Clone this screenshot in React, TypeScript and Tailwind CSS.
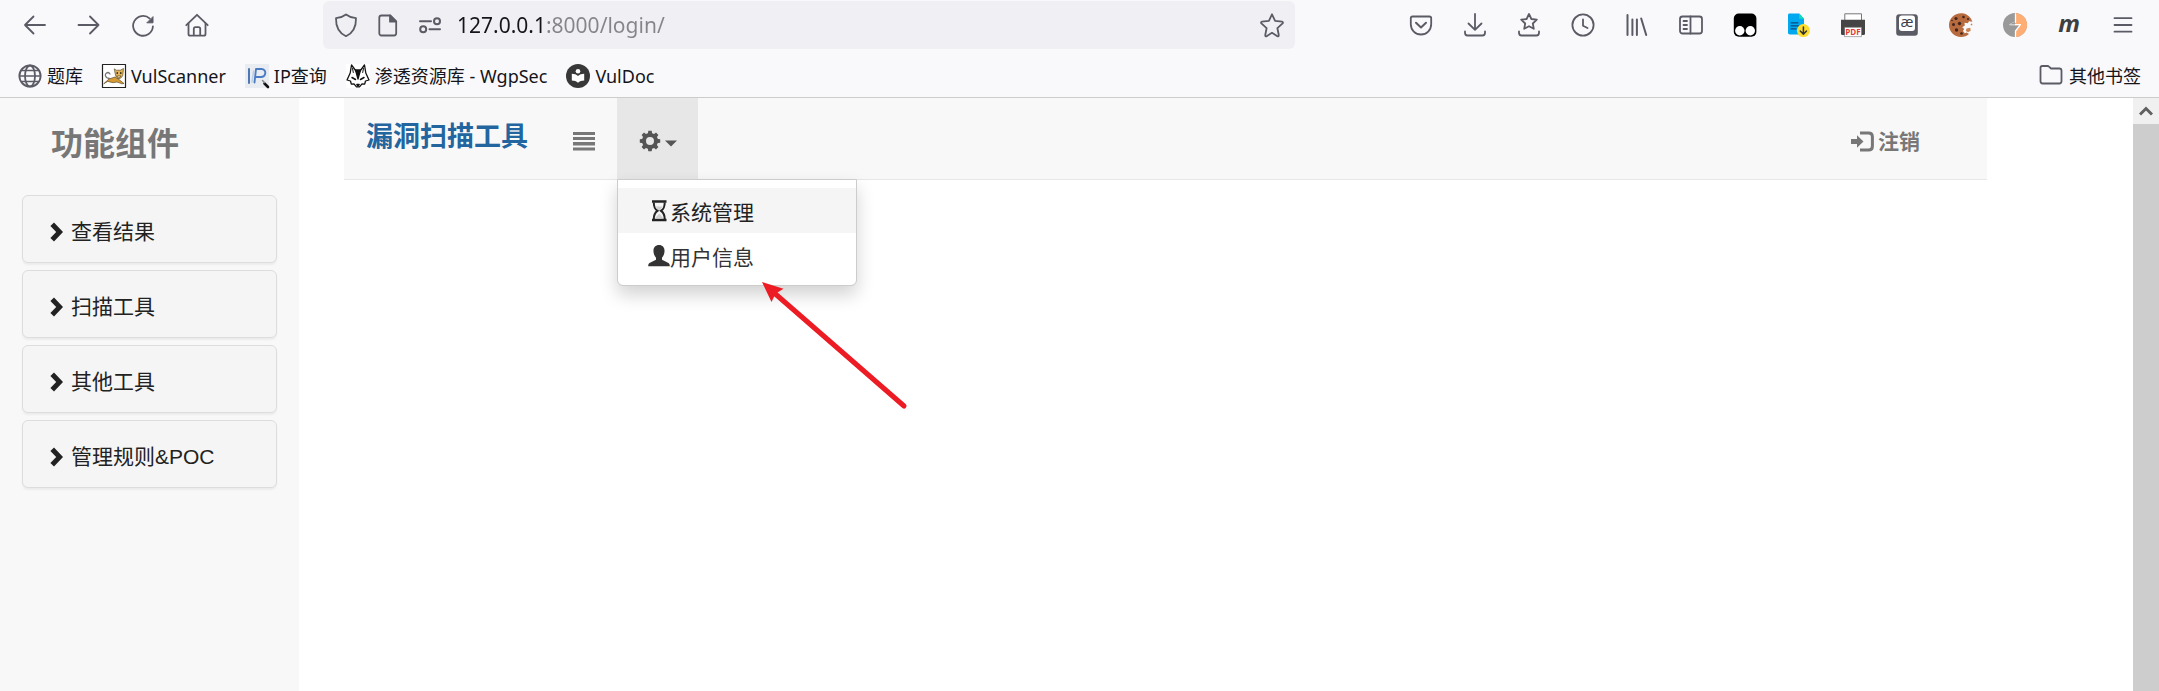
import type { ReactNode } from "react";

/* ---------- shared icon wrapper ---------- */

function Glyph({ children }: { children: ReactNode }) {
  return (
    <svg
      viewBox="0 0 24 24"
      className="size-6 shrink-0 overflow-visible"
      fill="none"
      stroke="#5b5b66"
      strokeWidth="1.8"
      strokeLinecap="round"
      strokeLinejoin="round"
      aria-hidden="true"
    >
      {children}
    </svg>
  );
}

const starPath =
  "M12 1.300l3.100 6.500 7 .9c.8.1 1.100 1 .5 1.600l-5.200 4.900 1.400 7c.2.8-.7 1.400-1.400 1L12 19.800l-5.400 3.400c-.7.4-1.600-.2-1.400-1l1.400-7-5.200-4.900c-.6-.6-.3-1.500.5-1.600l7-.9z";

/* ---------- browser toolbar ---------- */

const navButtons: { name: string; icon: ReactNode }[] = [
  { name: "Back", icon: <path d="M22 12H2M10.500 3.500L2 12l8.500 8.500" /> },
  { name: "Forward", icon: <path d="M1.500 12h20M13 3.500L21.500 12 13 20.500" /> },
  {
    name: "Reload",
    icon: (
      <>
        <path d="M18.800 5.600A9.900 9.900 0 1 0 21.900 13.500" />
        <path d="M22 4v5.800h-5.800z" fill="#5b5b66" strokeWidth="1" />
      </>
    ),
  },
  {
    name: "Home",
    icon: (
      <>
        <path d="M1.300 12.200L12 1.800l10.700 10.400" />
        <path d="M3.500 10.500v10.500c0 1 .7 1.700 1.700 1.700h13.600c1 0 1.700-.7 1.700-1.700V10.500" />
        <path d="M8.800 22.200v-6.400c0-1 .6-1.600 1.600-1.600h3.200c1 0 1.600.6 1.600 1.600v6.400" />
      </>
    ),
  },
];

const toolButtons: { name: string; icon: ReactNode }[] = [
  {
    name: "Pocket",
    icon: (
      <>
        <path d="M3.600 3.500h16.800c1 0 1.800.8 1.800 1.800v6a10.200 10.200 0 0 1-20.400 0v-6c0-1 .8-1.800 1.800-1.800z" />
        <path d="M7 9.700l5 4.700 5-4.700" strokeWidth="2" />
      </>
    ),
  },
  {
    name: "Downloads",
    icon: (
      <>
        <path d="M12 1v15.500M5.500 10.500L12 16.800l6.500-6.300" />
        <path d="M2 18.500v1.300c0 1.500 1 2.700 2.500 2.700h15c1.500 0 2.500-1.200 2.500-2.700v-1.300" />
      </>
    ),
  },
  {
    name: "Bookmarks menu",
    icon: (
      <>
        <path d="M12 1l2.400 5 5.400.7-4 3.800 1 5.300L12 13.200l-4.800 2.600 1-5.300-4-3.800 5.400-.7z" />
        <path d="M2 18.500v1.300c0 1.500 1 2.700 2.500 2.700h15c1.500 0 2.500-1.200 2.500-2.700v-1.300" />
      </>
    ),
  },
  {
    name: "History",
    icon: (
      <>
        <circle cx="12" cy="12" r="10.600" />
        <path d="M12 6.500v6.200l4.500 2.300" />
      </>
    ),
  },
  {
    name: "Library",
    icon: <path d="M2.500 2v20M7.400 6.500V22M11.900 6.500V22M16.200 5.500L21.200 22" strokeWidth="2" />,
  },
  {
    name: "Sidebars",
    icon: (
      <>
        <rect x="1" y="3.500" width="22" height="17" rx="2.500" />
        <path d="M11.500 3.500v17M4.500 8h3.500M4.500 12h3.500M4.500 16h3.500" />
      </>
    ),
  },
  {
    name: "Script manager",
    icon: (
      <g stroke="none">
        <rect x="0.800" y="0.500" width="22.600" height="23.300" rx="5" fill="#000" />
        <circle cx="6.800" cy="17.800" r="4.700" fill="#fff" />
        <circle cx="17.300" cy="17.800" r="4.700" fill="#fff" />
      </g>
    ),
  },
  {
    name: "Document download",
    icon: (
      <g stroke="none">
        <path d="M2.500.5h9.700l4.800 5.200v15.800H3C1.700 21.500 1 20.800 1 19.500V2C1 1.100 1.600.5 2.500.5z" fill="#00a8f0" />
        <path d="M12.200.500l4.800 5.200h-4.800z" fill="#10dcb4" />
        <path d="M4 9.800h7M4 12.800h7.500M4 15.800h5" stroke="#0b4a80" strokeWidth="1.300" />
        <circle cx="16.400" cy="17.600" r="6.500" fill="#fddc2e" />
        <path d="M16.400 14v7M13.300 18l3.100 3.100 3.100-3.100" stroke="#333" strokeWidth="1.500" fill="none" />
      </g>
    ),
  },
  {
    name: "Print to PDF",
    icon: (
      <g stroke="none">
        <path d="M3.800 7V.8h16.700V7" fill="#fff" stroke="#777" strokeWidth="1" />
        <path d="M0 6.700h24v13.800c0 .9-.5 1.500-1.300 1.500H1.300C.5 22 0 21.400 0 20.500z" fill="#454545" />
        <rect x="3.800" y="14.300" width="16.700" height="9.300" fill="#fff" stroke="#777" strokeWidth="0.600" />
        <text x="12" y="22" textAnchor="middle" fontSize="8" fontWeight="700" fontFamily="Open Sans, sans-serif" fill="#e53935">
          PDF
        </text>
      </g>
    ),
  },
  {
    name: "Phonetics",
    icon: (
      <g stroke="none">
        <rect x="1.200" y="1.200" width="21.600" height="21.600" rx="3" fill="#5b5b66" />
        <rect x="4" y="2.500" width="16" height="15.500" rx="3" fill="#fff" />
        <text x="12" y="14" textAnchor="middle" fontSize="15" fontFamily="Open Sans, sans-serif" fill="#3f3f4a">
          æ
        </text>
      </g>
    ),
  },
  {
    name: "Cookie editor",
    icon: (
      <g stroke="none">
        <path
          d="M13 .200C5.600-.2 0 5.200 0 12s5.300 12 12 12c3.300 0 6-1.200 8-3l-2.500-1.500-1.700.8-1.800-2.300 1.200-2-2-1.800 2.600-1.600-.3-2.800 3.300.4 1.200-2 3.400.6C22 4.200 18.200.500 13 .200z"
          fill="#b86b3e"
        />
        <path d="M17.500 15.500l3.800-.8.400 3-2.700 1.500-2.200-1.200z" fill="#c98352" />
        <path d="M22 10.500l1.500.6-.6 1.400-1.300-.4z" fill="#c98352" />
        <g fill="#43241c">
          <circle cx="7" cy="5.500" r="1.600" />
          <circle cx="14.500" cy="4" r="1.300" />
          <circle cx="4.500" cy="11.500" r="1.500" />
          <circle cx="10.500" cy="10.500" r="1.700" />
          <circle cx="7.500" cy="17" r="1.700" />
          <circle cx="19" cy="6" r="1" />
          <circle cx="12.500" cy="20.500" r="1.300" />
          <circle cx="3" cy="7.500" r=".8" />
        </g>
      </g>
    ),
  },
  {
    name: "Proxy switch",
    icon: (
      <g stroke="none">
        <circle cx="12" cy="12" r="12" fill="#999" />
        <path d="M12 0a12 12 0 0 1 0 24v-6l5.500-5.500H12V8.500z" fill="#ffad73" />
        <path d="M12.500 1v8.200L7 11.600h10.500L12.500 18v5.500" stroke="#fff" strokeWidth="1.300" fill="none" />
        <path d="M12 1v7.800L6 11.500h6z" fill="#999" />
      </g>
    ),
  },
  {
    name: "M extension",
    icon: (
      <text
        x="12"
        y="19"
        textAnchor="middle"
        fontSize="24"
        fontWeight="700"
        fontStyle="italic"
        fontFamily="Open Sans, sans-serif"
        fill="#3f3f3f"
        stroke="none"
      >
        m
      </text>
    ),
  },
  { name: "Menu", icon: <path d="M3.500 5.200h17M3.500 12h17M3.500 18.700h17" /> },
];

function ToolButton({ name, icon }: { name: string; icon: ReactNode }) {
  return (
    <button type="button" aria-label={name} className="flex h-12 w-[54px] items-center justify-center">
      <Glyph>{icon}</Glyph>
    </button>
  );
}

function AddressBar() {
  return (
    <form
      className="mx-[99px] flex h-12 min-w-0 flex-1 items-center rounded-md bg-[#f0f0f4] pr-[11px] pl-[11px]"
      onSubmit={(e) => e.preventDefault()}
    >
      <div className="flex gap-[18px]">
        <Glyph>
          <path d="M12 1.500c2.800 2.200 6 3.300 10 3.700.2 8.400-2.700 14.600-10 18-7.300-3.400-10.200-9.600-10-18 4-.4 7.200-1.500 10-3.700z" />
        </Glyph>
        <Glyph>
          <path d="M5.500 2.500h8.700l6 6v11.800c0 1.300-.9 2.200-2.200 2.200H5.500c-1.300 0-2.200-.9-2.200-2.200V4.700c0-1.300.9-2.200 2.200-2.200z" />
          <path d="M14 2.500v6.200h6.200z" fill="#5b5b66" />
        </Glyph>
        <Glyph>
          <path d="M2 8.300h11M11.500 16.300h10.500" strokeWidth="2" />
          <circle cx="19" cy="8.300" r="3" strokeWidth="2" />
          <circle cx="5.200" cy="16.300" r="3" strokeWidth="2" />
        </Glyph>
      </div>
      <input
        type="text"
        aria-label="Address"
        defaultValue="127.0.0.1:8000/login/"
        className="ml-[15px] min-w-0 flex-1 bg-[linear-gradient(to_right,#15141a_88px,#85848b_88px)] bg-clip-text font-['Noto_Sans',sans-serif] text-[21px] leading-8 text-transparent caret-black outline-none"
      />
      <button type="button" aria-label="Bookmark this page">
        <Glyph>
          <path d={starPath} />
        </Glyph>
      </button>
    </form>
  );
}

/* ---------- bookmarks ---------- */

const bookmarks: { title: string; icon: ReactNode }[] = [
  {
    title: "题库",
    icon: (
      <>
        <circle cx="12" cy="12" r="10.600" />
        <ellipse cx="12" cy="12" rx="5" ry="10.500" />
        <path d="M1.500 12h21M3.500 6.500h17M3.500 17.500h17" strokeWidth="1.500" />
      </>
    ),
  },
  {
    title: "VulScanner",
    icon: (
      <>
        <rect x=".5" y=".5" width="23" height="23" fill="#fff" stroke="#222" strokeWidth="1.200" />
        <g stroke="#4b3a1c" strokeWidth=".6">
          <path d="M2 19.500l5-4.500 6-2 4 2.500 5 4-2 .3-5-1.800-4 .7-5-1.200z" fill="#d59a35" />
          <path d="M12.500 5l1.800 1.200h4L21.500 4.500 21 9.500c0 3-2 5-4 5s-3.500-2-3.800-4.500z" fill="#e0b25a" />
          <path d="M15 12h4l-2 1.800z" fill="#fff4d0" />
          <path d="M15.200 8.500v1M18.800 8.500v1" stroke="#111" strokeWidth="1.200" />
        </g>
        <path d="M7.500 14.500C2.500 14 2 9 6 8.500c1.500 0 1.500 1.500 2 1.500" stroke="#777" strokeWidth="1.300" />
      </>
    ),
  },
  {
    title: "IP查询",
    icon: (
      <>
        <rect width="24" height="24" fill="#e9ecf1" stroke="none" />
        <path d="M4 5v14" stroke="#3d6cae" strokeWidth="1.800" />
        <path d="M9.500 18.500L11 5h5.500c5.500.2 4.800 8 -.7 8h-5" stroke="#4a7cc4" strokeWidth="1.900" />
        <path d="M7 18l1.500-11" stroke="#bccde4" strokeWidth="1.500" />
        <path d="M19.500 19.500l3.500 3.500" stroke="#111" strokeWidth="2.600" />
        <path d="M17.500 16.500l2 2" stroke="#888" strokeWidth="1.500" />
      </>
    ),
  },
  {
    title: "渗透资源库 - WgpSec",
    icon: (
      <>
        <rect width="24" height="24" fill="#fff" stroke="none" />
        <g stroke="#111" strokeWidth="1.300">
          <path d="M5.500 1l-1.300 8-3.200 7 3.500 1 .8 3.200 2.700-.4 2.500 3h3l2.500-3 2.700.4.8-3.200 3.500-1-3.200-7-1.300-8-4.500 6h-4z" />
          <path d="M9.500 6l2.500 9 2.500-9z" fill="#111" />
          <path d="M6 13.500l3.500 2M18 13.500l-3.500 2" strokeWidth="1.500" />
          <path d="M10.800 20.500h2.400l-1.200 1.500z" fill="#111" />
          <path d="M6.500 4.500l.8 4M17.500 4.500l-.8 4" strokeWidth="1" />
        </g>
      </>
    ),
  },
  {
    title: "VulDoc",
    icon: (
      <g stroke="none">
        <circle cx="12" cy="12" r="12" fill="#383838" />
        <circle cx="12" cy="7.300" r="2.300" fill="#fff" />
        <path d="M5.800 9.800c2.500 0 4.500.7 6.200 2.200 1.700-1.500 3.700-2.200 6.200-2.200v6.700c-2.500 0-4.500.7-6.200 2.200-1.700-1.500-3.700-2.200-6.200-2.200z" fill="#fff" />
      </g>
    ),
  },
];

function BrowserChrome() {
  return (
    <header className="border-b border-[#ccc] bg-[#f9f9fb] font-['Noto_Sans','Noto_Sans_CJK_SC',sans-serif] text-[#15141a]">
      <div className="flex items-center pt-px pr-[9px] pl-2">
        <nav aria-label="Browser navigation" className="flex">
          {navButtons.map((b) => (
            <ToolButton key={b.name} {...b} />
          ))}
        </nav>
        <AddressBar />
        <div className="flex">
          {toolButtons.map((b) => (
            <ToolButton key={b.name} {...b} />
          ))}
        </div>
      </div>
      <nav aria-label="Bookmarks" className="flex h-12 items-center gap-[19px] pt-1.5 pr-[18px] pl-[18px] text-lg leading-6 whitespace-nowrap">
        {bookmarks.map((b) => (
          <a key={b.title} href="#" className="flex items-center gap-[5px]">
            <Glyph>{b.icon}</Glyph>
            {b.title}
          </a>
        ))}
        <button type="button" className="ml-auto flex items-center gap-[6px]">
          <Glyph>
            <path d="M3.300 2h5.200c.6 0 1.100.2 1.500.6L12 4.500h8.300c1.200 0 2.200 1 2.200 2.200v10.600c0 1.200-1 2.200-2.200 2.200H3.700c-1.200 0-2.200-1-2.200-2.200V3.800C1.500 2.800 2.300 2 3.300 2z" />
          </Glyph>
          其他书签
        </button>
      </nav>
    </header>
  );
}

/* ---------- page ---------- */

const sections = ["查看结果", "扫描工具", "其他工具", "管理规则&POC"];

function Sidebar() {
  return (
    <aside className="w-[299px] shrink-0 bg-[#f8f8f8] px-[22px] pt-5">
      <h2 className="pl-[29px] text-[32px] leading-[52px] font-bold text-[#777]">功能组件</h2>
      <ul className="mt-[25px] flex flex-col gap-[7px]">
        {sections.map((s) => (
          <li key={s}>
            <button
              type="button"
              className="flex h-[68px] w-full items-center gap-2 rounded-md border border-[#ddd] bg-[#f5f5f5] pt-1.5 pl-[27px] text-left text-[21px] text-[#222] shadow-[0_2px_2px_rgba(0,0,0,0.05)]"
            >
              <svg viewBox="0 0 13 20" className="h-5 w-[13px]" fill="#222" aria-hidden="true">
                <path d="M4 .400l9 9.600-9 9.600L.400 16l5.800-6L.400 4z" />
              </svg>
              {s}
            </button>
          </li>
        ))}
      </ul>
    </aside>
  );
}

function SettingsMenu() {
  return (
    <div className="relative">
      <button
        type="button"
        aria-label="Settings"
        aria-expanded="true"
        className="flex h-[81px] w-[81px] items-center justify-center gap-1 bg-[#e7e7e7] pt-1"
      >
        <svg viewBox="0 0 22 22" className="size-[22px]" aria-hidden="true">
          <circle cx="11" cy="11" r="6" fill="none" stroke="#555" strokeWidth="4" />
          <g fill="#555">
            <path d="M9.300.800h3.400l.6 4H8.700zM9.300 21.200h3.400l.6-4H8.700zM.800 9.300v3.400l4 .6V8.700zM21.200 9.300v3.400l-4 .6V8.700z" />
            <path d="M2.600 5l2.400-2.400 3.200 2.400L5 8.200zM19.400 5L17 2.600 13.800 5 17 8.200zM2.600 17L5 19.400l3.200-2.400L5 13.800zM19.400 17L17 19.400 13.800 17l3.200-3.200z" />
          </g>
        </svg>
        <svg viewBox="0 0 12 12" className="size-3" fill="#555" aria-hidden="true">
          <path d="M0 5.500h12l-6 6z" />
        </svg>
      </button>
      <ul className="absolute top-[81px] left-0 w-60 rounded-b-md border border-[#ccc] bg-white bg-clip-padding pt-2 pb-[7px] text-[21px] leading-[41px] text-[#222] shadow-[0_9px_18px_rgba(0,0,0,0.175)]">
        <li>
          <a href="#" className="flex items-center bg-[#f5f5f5] pl-[30px]">
            <svg viewBox="0 0 22 22" className="size-[22px]" aria-hidden="true">
              <path d="M4 .300h14.500v2.500H4zM4 18.800h14.500v2.500H4z" fill="#222" />
              <path d="M5.800 2.500c0 5 1 6.500 3.700 8.300-2.700 1.800-3.700 3.400-3.700 8.300M16.700 2.500c0 5-1 6.500-3.700 8.300 2.700 1.800 3.700 3.400 3.700 8.300" fill="none" stroke="#222" strokeWidth="2" />
              <path d="M7.700 6.500h7l-2.500 3.700h-2zM11.200 13.500l4 4.500h-8z" fill="#222" fillOpacity=".18" />
            </svg>
            <span className="pt-1">系统管理</span>
          </a>
        </li>
        <li>
          <a href="#" className="flex items-center pl-[30px] text-[#333]">
            <svg viewBox="0 0 22 22" className="size-[22px]" fill="#333" aria-hidden="true">
              <path d="M11 0c3.600 0 5.800 2.500 5.500 6.500-.2 3-1.200 4.700-2.500 6.200v2l5.500 2.800c1.500.8 2.300 1.600 2.300 3.700H.2c0-2.100.8-2.900 2.300-3.700L8 14.700v-2C6.700 11.200 5.700 9.500 5.500 6.500 5.200 2.500 7.400 0 11 0z" />
            </svg>
            <span className="pt-1">用户信息</span>
          </a>
        </li>
      </ul>
      <svg
        viewBox="0 0 150 130"
        className="pointer-events-none absolute top-[182px] left-[143px] h-[130px] w-[150px]"
        aria-hidden="true"
      >
        <path d="M12 11L144 126" stroke="#ed1c24" strokeWidth="5" strokeLinecap="round" />
        <path d="M2 2l21.500 6.700-8 5L11.500 22z" fill="#ed1c24" />
      </svg>
    </div>
  );
}

function TopBar() {
  return (
    <nav aria-label="Main" className="mr-[146px] ml-[45px] flex h-[82px] items-start border-b border-[#e7e7e7] bg-[#f8f8f8]">
      <a href="#" className="pt-[19px] pl-[22px] text-[27px] leading-10 font-bold text-[#23659f]">
        漏洞扫描工具
      </a>
      <button type="button" aria-label="Toggle sidebar" className="ml-[22px] flex h-[81px] w-[67px] items-center justify-center pt-1.5">
        <svg viewBox="0 0 22 22" className="size-[22px]" fill="#777" aria-hidden="true">
          <path d="M0 1h22v3H0zM0 6h22v3H0zM0 11h22v3.500H0zM0 16.500h22v3H0z" />
        </svg>
      </button>
      <SettingsMenu />
      <a href="#" className="ml-auto flex h-[81px] items-center gap-1 pt-1.5 pr-[67px] text-[21px] font-bold text-[#777]">
        <svg viewBox="0 0 23 21" className="h-[21px] w-[23px]" aria-hidden="true">
          <path d="M0 8h6V4.300l6.500 6.200L6 16.700V13H0z" fill="#777" />
          <path d="M9 2h8.500c2.600 0 3.900 1.300 3.900 3.700v9.600c0 2.400-1.300 3.700-3.900 3.700H9" fill="none" stroke="#777" strokeWidth="3" />
        </svg>
        注销
      </a>
    </nav>
  );
}

export default function App() {
  return (
    <div className="flex min-h-screen flex-col bg-white">
      <BrowserChrome />
      <div className="flex flex-1 font-['Liberation_Sans','Noto_Sans_CJK_SC',sans-serif]">
        <Sidebar />
        <main className="min-w-0 flex-1">
          <TopBar />
        </main>
        <div className="flex w-[26px] shrink-0 flex-col bg-[#cdcdcd]">
          <button type="button" aria-label="Scroll up" className="flex h-[26px] items-center justify-center bg-[#f0f0f0]">
            <svg viewBox="0 0 14 12" className="h-3 w-[14px]" aria-hidden="true">
              <path d="M1 9.500l6-6 6 6" fill="none" stroke="#606060" strokeWidth="3" />
            </svg>
          </button>
        </div>
      </div>
    </div>
  );
}
